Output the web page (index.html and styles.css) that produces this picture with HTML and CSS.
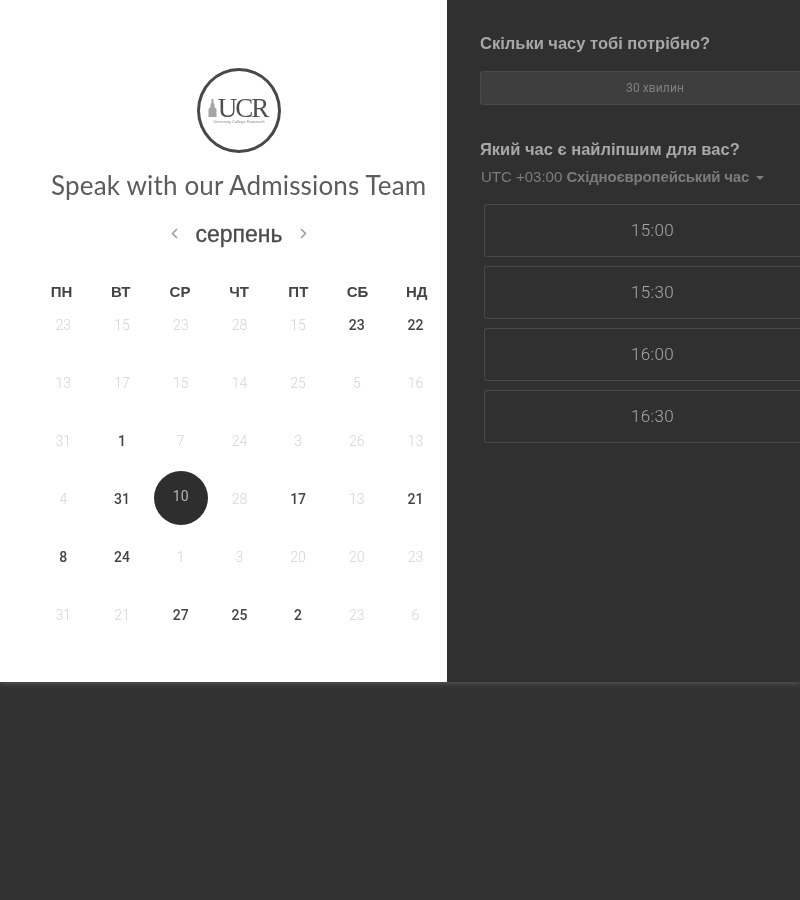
FILE: index.html
```html
<!DOCTYPE html>
<html lang="uk">
<head>
    <meta charset="UTF-8">
    <meta name="viewport" content="width=device-width, initial-scale=1.0">
    <title>Speak with our Admissions Team</title>
    <link rel="stylesheet" href="styles.css">
</head>
<body>

    <div class="booking">
        <!-- Calendar side -->
        <div class="calendar-side">
            <div class="logo">
                <div class="logo-row">
                    <svg class="logo-mark" width="9" height="18" viewBox="0 0 9 18">
                        <path d="M3.5 0h2v4l1 1v3l2 2v8H.5v-8l2-2V5l1-1z" fill="#a4a4a4"/>
                    </svg>
                    <span class="logo-name">UCR</span>
                </div>
                <span class="logo-sub">University College Roosevelt</span>
            </div>
            <h1 class="title">Speak with our Admissions Team</h1>

            <div class="month-row">
                <svg class="arrow" width="7" height="11" viewBox="0 0 7 11"><path d="M6 1 1.5 5.5 6 10" fill="none" stroke="#9a9a9a" stroke-width="1.5"/></svg>
                <span class="month">серпень</span>
                <svg class="arrow" width="7" height="11" viewBox="0 0 7 11"><path d="M1 1l4.5 4.5L1 10" fill="none" stroke="#9a9a9a" stroke-width="1.5"/></svg>
            </div>

            <div class="week-head">
                <span>ПН</span><span>ВТ</span><span>СР</span><span>ЧТ</span><span>ПТ</span><span>СБ</span><span>НД</span>
            </div>

            <div class="days">
                <span>23</span><span>15</span><span>23</span><span>28</span><span>15</span><span class="open">23</span><span class="open">22</span>
                <span>13</span><span>17</span><span>15</span><span>14</span><span>25</span><span>5</span><span>16</span>
                <span>31</span><span class="open">1</span><span>7</span><span>24</span><span>3</span><span>26</span><span>13</span>
                <span>4</span><span class="open">31</span><span class="selected"><b>10</b></span><span>28</span><span class="open">17</span><span>13</span><span class="open">21</span>
                <span class="open">8</span><span class="open">24</span><span>1</span><span>3</span><span>20</span><span>20</span><span>23</span>
                <span>31</span><span>21</span><span class="open">27</span><span class="open">25</span><span class="open">2</span><span>23</span><span>6</span>
            </div>
        </div>

        <!-- Time side -->
        <div class="time-side">
            <h2 class="question">Скільки часу тобі потрібно?</h2>
            <div class="duration">30 хвилин</div>

            <h2 class="question second">Який час є найліпшим для вас?</h2>
            <div class="timezone">UTC +03:00 <strong>Східноєвропейський час</strong> <i class="caret"></i></div>

            <div class="slots">
                <div class="slot">15:00</div>
                <div class="slot">15:30</div>
                <div class="slot">16:00</div>
                <div class="slot">16:30</div>
            </div>
        </div>
    </div>

</body>
</html>
```

FILE: styles.css
```css
/* page */
html, body {
    height: 100%;
}

body {
    margin: 0;
    overflow: hidden;
    background-color: #323232;
    font-family: 'Liberation Sans', Arial, sans-serif;
    filter: grayscale(1);
}

.booking {
    display: flex;
    height: 682px;
    box-shadow: 0 1px 6px rgba(255, 255, 255, 0.2);
}

/* Calendar side */
.calendar-side {
    width: 447px;
    flex: none;
    box-sizing: border-box;
    background-color: #fff;
    padding-top: 68px;
}

.logo {
    width: 84px;
    height: 85px;
    box-sizing: border-box;
    margin-left: 197px;
    border: 3px solid #484848;
    border-radius: 50%;
    display: flex;
    flex-direction: column;
    align-items: center;
    justify-content: center;
}

.logo-row {
    display: flex;
    align-items: center;
    gap: 1px;
    height: 22px;
    margin-left: -3px;
}

.logo-name {
    font-family: 'Liberation Serif', serif;
    font-size: 27px;
    line-height: 22px;
    letter-spacing: -2px;
    color: #505050;
}

.logo-sub {
    font-size: 4px;
    line-height: 5px;
    white-space: nowrap;
    color: #8a8a8a;
}

.title {
    margin: 16px 0 0 51px;
    font-family: Lato, sans-serif;
    font-size: 26px;
    line-height: 32px;
    font-weight: 400;
    letter-spacing: 0.17px;
    color: #5c5c5c;
    white-space: nowrap;
}

.month-row {
    display: flex;
    align-items: center;
    justify-content: center;
    gap: 17px;
    margin: 18px 0 0 31px;
    height: 30px;
}

.month {
    margin-top: 1px;
    font-size: 23px;
    color: #4a4a4a;
    -webkit-text-stroke: 0.3px #4a4a4a;
}

.arrow {
    margin-top: -2px;
}

.week-head, .days {
    display: grid;
    text-align: center;
}

.week-head {
    grid-template-columns: repeat(7, 59.2px);
    margin: 35px 0 0 32px;
    font-size: 15px;
    line-height: 16px;
    font-weight: 700;
    color: #444;
}

.days {
    grid-template-columns: repeat(7, 58.7px);
    grid-auto-rows: 58px;
    margin: -4px 0 0 34px;
    font-family: Roboto, sans-serif;
    font-size: 14px;
    color: #d4d4d4;
    font-weight: 300;
}

.days span {
    display: flex;
    align-items: center;
    justify-content: center;
    height: 58px;
}

.days .open {
    color: #444;
    font-weight: 500;
}

.days .selected b {
    width: 54px;
    height: 54px;
    flex: none;
    border-radius: 50%;
    background-color: #2e2e2e;
    color: #b5b5b5;
    font-weight: 400;
    display: flex;
    align-items: center;
    justify-content: center;
    padding-bottom: 4px;
    box-sizing: border-box;
    margin-top: -3px;
}

/* Time side */
.time-side {
    flex: 1;
    padding: 33px 0 0 33px;
    background-color: #303030;
}

.question {
    margin: 0;
    font-size: 16.5px;
    line-height: 20px;
    font-weight: 700;
    color: #a8a8a8;
}

.duration {
    margin-top: 18px;
    height: 34px;
    line-height: 33px;
    box-sizing: border-box;
    padding-left: 29px;
    text-align: center;
    font-family: Roboto, sans-serif;
    font-size: 12px;
    letter-spacing: 0.1px;
    color: #808080;
    background-color: #3e3e3e;
    border: 1px solid #484848;
    border-right: none;
    border-radius: 3px 0 0 3px;
}

.question.second {
    margin-top: 34px;
}

.timezone {
    margin: 9px 0 0 1px;
    font-size: 15px;
    line-height: 18px;
    color: #7c7c7c;
    white-space: nowrap;
}

.timezone strong {
    font-weight: 700;
    letter-spacing: -0.18px;
}

.caret {
    display: inline-block;
    margin-left: 3px;
    vertical-align: 2px;
    border-left: 4px solid transparent;
    border-right: 4px solid transparent;
    border-top: 4px solid #7c7c7c;
}

.slots {
    display: flex;
    flex-direction: column;
    gap: 9px;
    margin: 18px 0 0 4px;
}

.slot {
    height: 53px;
    box-sizing: border-box;
    padding-left: 20px;
    border: 1px solid #484848;
    border-right: none;
    border-radius: 3px 0 0 3px;
    text-align: center;
    line-height: 51px;
    font-family: Roboto, sans-serif;
    font-size: 17px;
    font-weight: 300;
    letter-spacing: 0.3px;
    color: #a8a8a8;
}
```
